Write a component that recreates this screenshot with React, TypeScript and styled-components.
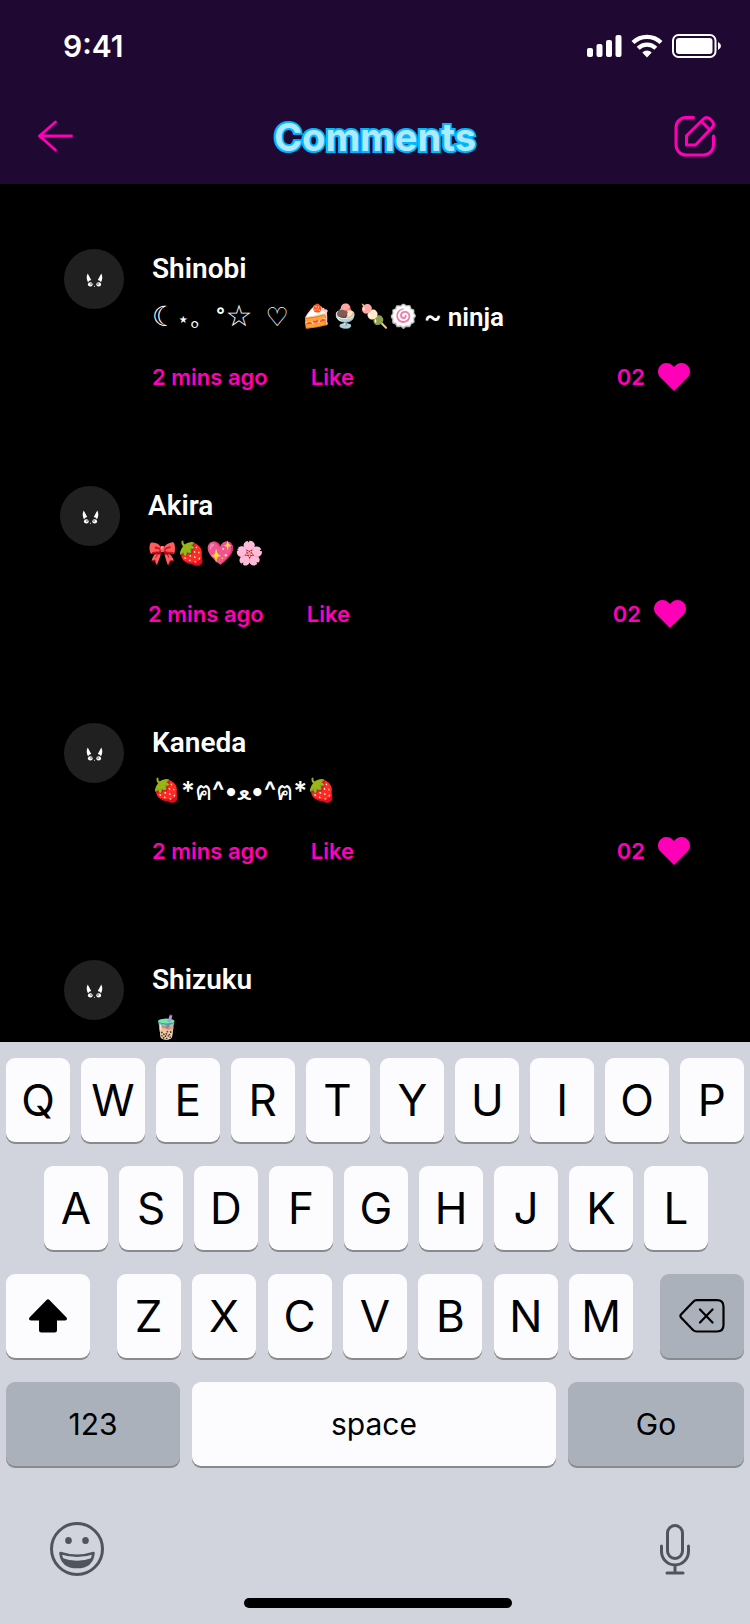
import React from "react";
import styled, { createGlobalStyle } from "styled-components";

const Global = createGlobalStyle`
  * { box-sizing: border-box; }
  body { margin: 0; background: #000; }
  button { border: 0; padding: 0; margin: 0; background: none; color: inherit; font: inherit; cursor: pointer; }
`;

const Screen = styled.div`
  height: 100vh;
  display: flex;
  flex-direction: column;
  background: #000;
  color: #fff;
  font-family: Inter, "Noto Sans", sans-serif;
`;

const Header = styled.header`
  background: #1f0933;
`;

const StatusBar = styled.div`
  height: 92px;
  padding: 0 28px 0 63px;
  display: flex;
  align-items: center;
  justify-content: space-between;
`;

const Clock = styled.time`
  font-size: 30px;
  line-height: 36px;
  font-weight: 600;
`;

const StatusIcons = styled.div`
  display: flex;
  align-items: center;
  gap: 9px;
`;

const NavBar = styled.div`
  height: 92px;
  padding: 0 35px 2px;
  display: grid;
  grid-template-columns: 44px 1fr 44px;
  align-items: center;
`;

const Title = styled.h1`
  margin: 0;
  text-align: center;
  font-size: 38px;
  line-height: 48px;
  font-weight: 700;
  color: #aee9ff;
  -webkit-text-stroke: 4px #00b8ff;
  paint-order: stroke fill;
`;

const IconButton = styled.button`
  width: 44px;
  height: 44px;
  display: flex;
  align-items: center;
  justify-content: center;
`;

const List = styled.ul`
  flex: 1 1 0;
  min-height: 0;
  overflow: hidden;
  margin: 0;
  padding: 65px 0 0;
  list-style: none;
  display: flex;
  flex-direction: column;
  gap: 89px;
`;

const Comment = styled.li<{ $inset: number }>`
  flex: none;
  display: flex;
  gap: 28px;
  padding: 0 ${(p) => 124 - p.$inset}px 0 ${(p) => p.$inset}px;
`;

const Avatar = styled.div`
  flex: none;
  width: 60px;
  height: 60px;
  border-radius: 50%;
  background: #202020;
`;

const Body = styled.div`
  flex: 1;
  min-width: 0;
`;

const Name = styled.h2`
  margin: 0 0 8px;
  font-family: Roboto, sans-serif;
  font-size: 28px;
  line-height: 40px;
  font-weight: 600;
`;

const Message = styled.p`
  margin: 0;
  height: 40px;
  font-family: Roboto, sans-serif;
  font-size: 26px;
  line-height: 40px;
  font-weight: 600;
  white-space: pre;
`;

const Emoji = styled.span`
  font-size: 23px;
  line-height: 1;
  vertical-align: 2px;
`;

const Symbols = styled.span<{ $size: number }>`
  font-family: "DejaVu Sans", sans-serif;
  font-size: ${(p) => p.$size}px;
  line-height: 1;
  font-weight: 400;
`;

const Kaomoji = styled.span`
  font-family: Inter, "Noto Sans", sans-serif;
  font-size: 26px;
`;

const Light = styled.span`
  font-weight: 400;
`;

const Meta = styled.div`
  display: flex;
  align-items: center;
  height: 40px;
  margin-top: 20px;
  gap: 43px;
  color: #ff00b8;
  font-size: 22px;
  line-height: 40px;
  font-weight: 600;
`;

const Likes = styled.span`
  margin-left: auto;
  display: flex;
  align-items: center;
  gap: 13px;
`;

const Keyboard = styled.section`
  flex: none;
  background: #d1d4dc;
  color: #000;
  padding: 16px 6px;
`;

const KeyRow = styled.div<{ $inset?: string }>`
  display: flex;
  justify-content: space-between;
  padding: ${(p) => p.$inset ?? "0"};
  margin-bottom: 24px;
`;

const LetterGroup = styled.div`
  width: 70%;
  display: flex;
  justify-content: space-between;
`;

const Key = styled.button<{ $width?: string; $dark?: boolean; $label?: boolean }>`
  width: ${(p) => p.$width ?? "64px"};
  height: 84px;
  border-radius: 9px;
  background: ${(p) => (p.$dark ? "#abb1bb" : "#fcfcfe")};
  box-shadow: 0 2px 0 #898a8d;
  display: flex;
  align-items: center;
  justify-content: center;
  font-size: ${(p) => (p.$label ? 30 : 44)}px;
  line-height: 52px;
  font-weight: 400;
`;

const KeyboardFooter = styled.div`
  display: flex;
  justify-content: space-between;
  padding: 32px 42px 0 44px;
`;

const HomeBar = styled.div`
  width: 268px;
  height: 10px;
  border-radius: 5px;
  background: #000;
  margin: 18px 0 0 calc(50% - 131px);
`;

const Face = () => (
  <svg width="60" height="60" viewBox="0 0 60 60" fill="#fff" aria-hidden="true">
    <path d="M23.700 24.500 27.200 31Q25 31.300 24 33.300 21.600 29 23.700 24.500ZM37.300 24.500 33.800 31Q36 31.300 37 33.300 39.400 29 37.300 24.500Z" />
    <ellipse cx="26.300" cy="35.400" rx="2.400" ry="2.100" />
    <ellipse cx="34.700" cy="35.400" rx="2.400" ry="2.100" />
    <circle cx="27" cy="35" r=".7" fill="#202020" />
    <circle cx="34" cy="35" r=".7" fill="#202020" />
    <circle cx="30.500" cy="37.300" r=".5" />
  </svg>
);

const HeartIcon = () => (
  <svg width="32" height="28" viewBox="0 0 32 28" fill="#ff00b8" aria-hidden="true">
    <path d="M16 28 2.500 14.600C-.8 11.300-.8 5.800 2.500 2.500 5.800-.8 11.200-.8 14.500 2.500L16 4l1.500-1.500c3.300-3.300 8.700-3.300 12 0 3.300 3.300 3.300 8.800 0 12.100Z" />
  </svg>
);

type Entry = { name: string; message: React.ReactNode; inset: number; age?: string; likes?: string };

const comments: Entry[] = [
  {
    name: "Shinobi",
    message: (
      <>
        <Symbols $size={28}>☾</Symbols>
        <Symbols $size={20}>⋆</Symbols>
        <Symbols $size={26}>｡</Symbols>
        {"  °"}
        <Symbols $size={30}>☆</Symbols>
        {"  "}
        <Symbols $size={26}>♡</Symbols>
        {"  "}
        <Emoji>🍰🍨🍡🍥</Emoji>
        {" ~ ninja"}
      </>
    ),
    inset: 64,
    age: "2 mins ago",
    likes: "02",
  },
  { name: "Akira", message: <Emoji>🎀🍓💖🌸</Emoji>, inset: 60, age: "2 mins ago", likes: "02" },
  {
    name: "Kaneda",
    message: (
      <>
        <Emoji>🍓</Emoji>
        <Kaomoji>
          *<Light>ฅ</Light>^•<Light>ﻌ</Light>•^<Light>ฅ</Light>*
        </Kaomoji>
        <Emoji>🍓</Emoji>
      </>
    ),
    inset: 64,
    age: "2 mins ago",
    likes: "02",
  },
  { name: "Shizuku", message: <Emoji>🧋</Emoji>, inset: 64 },
];

const letters = (row: string) => row.split("").map((c) => <Key key={c}>{c}</Key>);

export default function App() {
  return (
    <Screen>
      <Global />
      <Header>
        <StatusBar>
          <Clock>9:41</Clock>
          <StatusIcons>
            <svg width="35" height="24" viewBox="0 0 35 24" fill="#fff" aria-hidden="true">
              <rect x="0" y="14" width="6" height="9" rx="2" />
              <rect x="9.500" y="10" width="6" height="13" rx="2" />
              <rect x="19" y="6" width="6" height="17" rx="2" />
              <rect x="28.500" y="1" width="6" height="22" rx="2" />
            </svg>
            <svg width="32" height="24" viewBox="0 0 32 24" fill="none" stroke="#fff" strokeWidth="4.200" aria-hidden="true">
              <path d="M2 8.500a20 20 0 0 1 28 0M7.200 14.300a12.500 12.500 0 0 1 17.600 0" />
              <path d="M16 23.500 11.300 18.500a6.800 6.800 0 0 1 9.400 0Z" fill="#fff" stroke="none" />
            </svg>
            <svg width="50" height="24" viewBox="0 0 50 24" fill="none" aria-hidden="true">
              <rect x="1" y="1" width="42.500" height="22" rx="5.500" stroke="#fff" strokeWidth="2" />
              <rect x="4" y="4" width="36.500" height="16" rx="3" fill="#fff" />
              <path d="M46 8q3 1.500 3 4t-3 4Z" fill="#fff" />
            </svg>
          </StatusIcons>
        </StatusBar>
        <NavBar>
          <IconButton aria-label="Back">
            <svg width="40" height="40" viewBox="0 1 40 40" fill="none" stroke="#ff00b8" strokeWidth="2.800" strokeLinecap="round" strokeLinejoin="round">
              <path d="M34.500 20H2.500M18.500 6 2.500 20l16 14" />
            </svg>
          </IconButton>
          <Title>Comments</Title>
          <IconButton aria-label="Write a comment">
            <svg width="44" height="44" viewBox="-2 1 44 44" fill="none" stroke="#ff00b8" strokeWidth="3" strokeLinecap="round" strokeLinejoin="round">
              <path d="M20.500 3.500H13A10 10 0 0 0 3 13.500V31a10 10 0 0 0 10 10h17.500a10 10 0 0 0 10-10v-9" />
              <path d="M13.500 31V21.700L30.500 5Q33.500 2 37 5l2 2q3 3.500 0 6.500L22.500 31ZM28.500 7.500l8.500 8.500" />
            </svg>
          </IconButton>
        </NavBar>
      </Header>
      <List>
        {comments.map((c) => (
          <Comment key={c.name} $inset={c.inset}>
            <Avatar><Face /></Avatar>
            <Body>
              <Name>{c.name}</Name>
              <Message>{c.message}</Message>
              {c.age && (
                <Meta>
                  <span>{c.age}</span>
                  <button>Like</button>
                  <Likes>{c.likes} <HeartIcon /></Likes>
                </Meta>
              )}
            </Body>
          </Comment>
        ))}
      </List>
      <Keyboard aria-label="Keyboard">
        <KeyRow>{letters("QWERTYUIOP")}</KeyRow>
        <KeyRow $inset="0 36px 0 38px">{letters("ASDFGHJKL")}</KeyRow>
        <KeyRow>
          <Key $width="84px" aria-label="Shift">
            <svg width="38" height="34" viewBox="0 0 38 34">
              <path d="M17.800.8Q19-.3 20.200.8L37.500 18.500Q39 21.300 36 21.500H28V31q0 2.500-2.500 2.500h-13Q10 33.500 10 31V21.500H2Q-1 21.300.5 18.500Z" />
            </svg>
          </Key>
          <LetterGroup>{letters("ZXCVBNM")}</LetterGroup>
          <Key $width="84px" $dark aria-label="Delete">
            <svg width="46" height="34" viewBox="0 0 46 34" fill="none" stroke="#000" strokeWidth="2.200" strokeLinecap="round" strokeLinejoin="round">
              <path d="M18 1.200H38q6.500 0 6.500 6.500V26q0 6.500-6.500 6.500H18q-2.500 0-4-1.500L2 18.500Q.8 17 2 15.500L14 3Q15.500 1.200 18 1.200ZM21 10.500 33.500 23.500M33.500 10.500 21 23.500" />
            </svg>
          </Key>
        </KeyRow>
        <KeyRow>
          <Key $width="174px" $dark $label>123</Key>
          <Key $width="calc(100% - 374px)" $label>space</Key>
          <Key $width="176px" $dark $label>Go</Key>
        </KeyRow>
        <KeyboardFooter>
          <button aria-label="Emoji">
            <svg width="54" height="54" viewBox="0 0 54 54" fill="none" stroke="#50555c" strokeWidth="3">
              <circle cx="27" cy="27" r="25.500" />
              <ellipse cx="18.500" cy="18.500" rx="3.300" ry="3.500" fill="#50555c" stroke="none" />
              <ellipse cx="35.500" cy="18.500" rx="3.300" ry="3.500" fill="#50555c" stroke="none" />
              <path d="M10.500 31Q27 36.500 43.500 31 42 45 27 45T10.500 31Z" strokeWidth="2.600" strokeLinejoin="round" />
              <path d="M12 36q15 5.500 30 0-4 9-15 9T12 36Z" fill="#50555c" stroke="none" />
            </svg>
          </button>
          <button aria-label="Dictate">
            <svg width="54" height="54" viewBox="0 0 54 54" fill="none" stroke="#50555c" strokeWidth="3" strokeLinecap="round">
              <rect x="19.500" y="3.500" width="15" height="33" rx="7.500" />
              <path d="M13.500 24v5.500a13.500 13.500 0 0 0 27 0V24M27 43v7M19 51H35" />
            </svg>
          </button>
        </KeyboardFooter>
        <HomeBar />
      </Keyboard>
    </Screen>
  );
}
